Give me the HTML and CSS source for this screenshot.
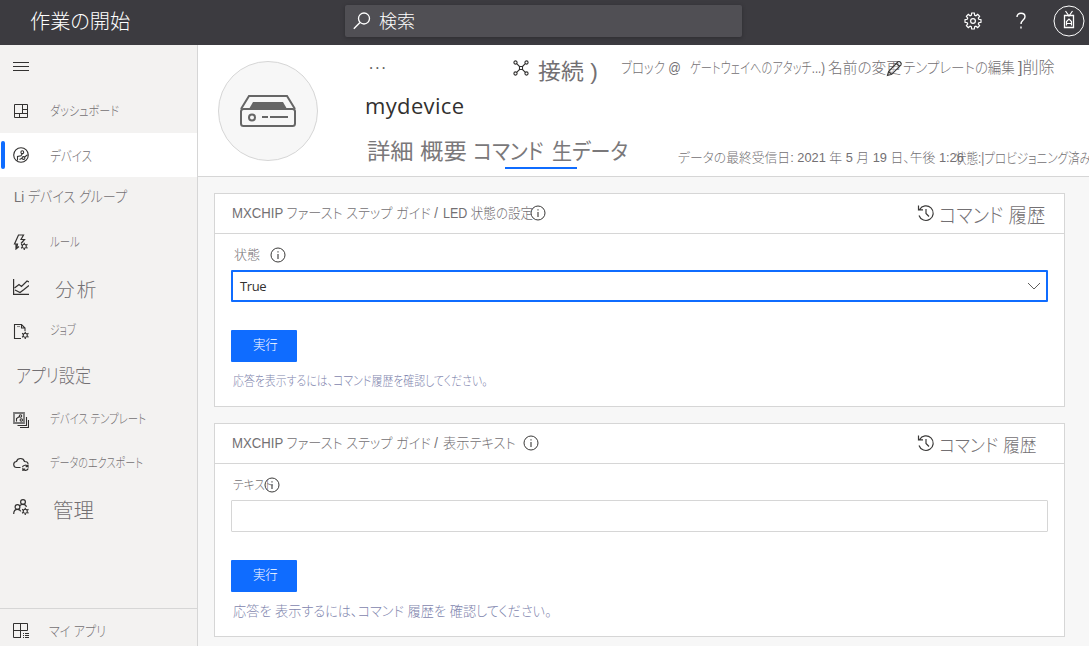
FILE: index.html
```html
<!DOCTYPE html>
<html lang="ja">
<head>
<meta charset="utf-8">
<title>作業の開始</title>
<link rel="stylesheet" href="styles.css">
</head>
<body>
<svg class="defs" width="0" height="0">
  <symbol id="info" viewBox="0 0 16 16"><circle cx="8" cy="8" r="7" fill="#fff" fill-opacity=".4" stroke="#3b3a39"/><path d="M8 7v5M8 4.2v1.4" stroke="#3b3a39" stroke-width="1.1"/></symbol>
  <symbol id="cog" viewBox="0 0 16 16"><circle cx="8" cy="8" r="4.400" fill="none" stroke="#323130" stroke-width="2.400"/><path d="M8 0v3M8 13v3M1.100 4l2.600 1.500M12.300 10.500l2.600 1.500M1.100 12l2.600-1.500M12.300 5.500l2.600-1.500" stroke="#323130" stroke-width="2.600"/></symbol>
  <symbol id="history" viewBox="0 0 18 18"><path d="M2.600 5.500A7.300 7.300 0 1 1 2 11.500M1.500 1.500v4.300h4.500M9 5v4.500l3 3" fill="none" stroke="#3b3a39" stroke-width="1.200"/></symbol>
</svg>
<header class="topbar">
  <div class="txt brand">作業の開始</div>
  <div class="search">
    <svg width="18" height="18" viewBox="0 0 18 18"><circle cx="11" cy="6.500" r="5.500" fill="none" stroke="#fff" stroke-width="1.300"/><path d="M7 10.500L.8 16.800" stroke="#fff" stroke-width="1.400"/></svg>
    <div class="txt search-text">検索</div>
  </div>
  <div class="top-actions">
    <svg width="18" height="18" viewBox="0 0 18 18" fill="none" stroke="#fff" stroke-width="1.200"><circle cx="9" cy="9" r="2.400"/><path d="M7.700 1h2.600l.4 2.200 1.200.5 1.800-1.300 1.900 1.900-1.300 1.800.5 1.200 2.200.4v2.600l-2.200.4-.5 1.200 1.300 1.800-1.900 1.900-1.800-1.300-1.200.5-.4 2.200H7.700l-.4-2.200-1.200-.5-1.800 1.300-1.900-1.900 1.300-1.800-.5-1.200L1 10.300V7.700l2.200-.4.5-1.200-1.300-1.800 1.900-1.900 1.800 1.300 1.200-.5z"/></svg>
    <svg width="12" height="18" viewBox="0 0 12 18" fill="none" stroke="#fff" stroke-width="1.400"><path d="M2 5c0-2.300 1.600-3.800 4-3.800S10 2.500 10 4.700c0 3.300-4 3.500-4 7.300M6 14.500v2"/></svg>
    <svg width="32" height="32" viewBox="0 0 32 32" fill="none" stroke="#fff"><circle cx="16" cy="16" r="15"/><path d="M11.500 10.500h9v12h-9z" stroke-width="1.300"/><path d="M12.500 6l3.500 5 3.500-5M13.500 20.500v-4l2.500-2.500 2.500 2.500v4M13.500 18.500h5" stroke-width="1.200"/></svg>
  </div>
</header>
<div class="body">
  <nav class="nav">
    <div class="item menu"><svg width="16" height="10" viewBox="0 0 16 10"><path d="M0 .5h16M0 4.500h16M0 8.500h16" stroke="#323130"/></svg></div>
    <div class="item"><svg width="16" height="16" viewBox="0 0 16 16" fill="none" stroke="#323130"><path d="M1.500 1.500h13v13h-13zM9.500 1.500v9M1.500 10.500h13M6.500 10.500v4M9.500 6.500h5"/></svg><span class="txt n-dash">ダッシュボード</span></div>
    <div class="item active"><svg width="16" height="16" viewBox="0 0 16 16" fill="none" stroke="#323130" stroke-width="1.100"><circle cx="8" cy="8" r="7.300"/><circle cx="9.300" cy="5.200" r="1.400"/><circle cx="10.500" cy="11" r="1.400"/><path d="M4.500 13.500V9.500l3.500-.8 1.200-2M11.600 10l3-2.200M6.500 12.500l2.500-1.300"/></svg><span class="txt n-dev">デバイス</span></div>
    <div class="item group"><span class="txt n-group">Li デバイス グループ</span></div>
    <div class="item rule"><svg width="16" height="16" viewBox="0 0 16 16" fill="none" stroke="#323130" stroke-width="1.200"><path d="M3.500 15l1-5H1.500L5.500 1h5L8 5.500h3.500L8 9.500M3 10.500v4.500l3-2.500"/><use href="#cog" x="7.500" y="8.500" width="7.500" height="7.500"/></svg><span class="txt n-rule">ルール</span></div>
    <div class="item ana"><svg width="16" height="16" viewBox="0 0 16 16" fill="none" stroke="#323130" stroke-width="1.200"><path d="M.6 0v15.400H16"/><path d="M1.500 9L6 5.500l2.500 2L14 2l2 1M2 11l5 2.500 4-3 5-4"/></svg><span class="txt n-ana">分析</span></div>
    <div class="item job"><svg width="16" height="16" viewBox="0 0 16 16" fill="none" stroke="#323130" stroke-width="1.100"><path d="M8 15.500H1.500v-14h7l3.500 3.500v3M8.500 1.500v3.500H12"/><path d="M4 3.500h3" stroke="#888"/><use href="#cog" x="8.500" y="8.500" width="7.500" height="7.500"/></svg><span class="txt n-job">ジョブ</span></div>
    <div class="item set"><span class="txt n-set">アプリ設定</span></div>
    <div class="item tpl"><svg width="16" height="16" viewBox="0 0 16 16" fill="none" stroke="#323130" stroke-width="1.100"><path d="M1 1h10v10H1z" stroke="#777" stroke-width="1.800"/><path d="M13.500 5v8.500H4.500M15.500 8v7.500H7"/><circle cx="7.500" cy="4" r="1.200"/><circle cx="8.300" cy="8" r="1.200"/><path d="M3.500 9.500v-3l3-2"/></svg><span class="txt n-tpl">デバイス テンプレート</span></div>
    <div class="item exp"><svg width="16" height="16" viewBox="0 0 16 16" fill="none" stroke="#323130" stroke-width="1.200"><path d="M7.500 11.500H4a3 3 0 0 1-.5-6C4 3.500 6 2.500 7.500 2.500c2 0 3.500 1 4 3 2 0 3.500 1 3.500 2.500"/><path d="M9.500 11c.5-2 4-2.500 5.500-.5V8.500M15 10.700h-2.300M15.200 12.500c-.7 2.200-4 2.500-5.300.7V15M9.900 13h2.300"/></svg><span class="txt n-exp">データのエクスポート</span></div>
    <div class="item adm"><svg width="16" height="16" viewBox="0 0 16 16" fill="none" stroke="#323130" stroke-width="1.200"><circle cx="10" cy="3" r="2.400"/><circle cx="4.500" cy="8" r="2.400"/><path d="M.7 15c0-3 1.500-4.600 3.800-4.600 1.500 0 2.800.7 3.300 2M6.500 7c.7-1 2-1.700 3.500-1.700s3 .7 3.500 2.500"/><use href="#cog" x="8.500" y="8.500" width="7.500" height="7.500"/></svg><span class="txt n-adm">管理</span></div>
    <div class="item apps"><svg width="16" height="16" viewBox="0 0 16 16" fill="none" stroke="#323130"><path d="M8 14.500H.5V.5h14v7H.5M7.500.5v14" /><path d="M10 10.500h1M12 10.500h4M10 12.500h1M12 12.500h4M10 14.500h1M12 14.500h4"/></svg><span class="txt n-apps">マイ アプリ</span></div>
  </nav>
  <main class="main">
    <section class="device">
      <div class="avatar"><svg width="58" height="34" viewBox="0 0 58 34" fill="none" stroke="#666" stroke-width="2"><path d="M2 15L10 2h38l8 13"/><path d="M14 8h30l4 7H10z" fill="#666" stroke="none"/><rect x="2" y="15" width="54" height="17" rx="2.500"/><circle cx="13" cy="23.500" r="3"/><path d="M23 23h6M31 23h18"/></svg></div>
      <div class="info">
        <div class="toolbar">
          <span class="dots">···</span>
          <svg class="conn" width="16" height="16" viewBox="0 0 16 16" fill="none" stroke="#323130" stroke-width="1.100"><circle cx="2.500" cy="2.500" r="1.600"/><circle cx="13.500" cy="2.500" r="1.600"/><circle cx="2.500" cy="13.500" r="1.600"/><circle cx="13.500" cy="13.500" r="1.600"/><path d="M3.700 3.700L7 7M12.300 3.700L9 7M3.700 12.300L7 9M12.300 12.300L9 9M6.500 6.500h3v3h-3z"/></svg>
          <span class="txt a-conn"><b>接続</b> )</span>
          <span class="txt a-block">ブロック @</span>
          <span class="txt a-gate">ゲートウェイへのアタッチ...)</span>
          <span class="txt a-name">名前の変更</span>
          <svg class="pencil" width="17" height="17" viewBox="0 0 17 17"><path d="M1.500 15.500l1.200-4.200L12 1.800c1.500-1 4 1.200 3 3L5.700 14.300zM10.500 3.500l3 3M2.700 11.300l3 3" fill="#fff" fill-opacity=".45" stroke="#3b3a39" stroke-width="1.200"/></svg>
          <span class="txt a-tpl">テンプレートの編集</span>
          <span class="txt a-del"><i>]</i>削除</span>
        </div>
        <h1>mydevice</h1>
        <div class="subrow">
          <div class="tabs"><span class="txt tab-a">詳細 概要</span><span class="txt tab-b">コマンド</span><span class="txt tab-c">生データ</span></div>
          <span class="txt s-date">データの最終受信日: 2021 年 5 月 19 日、午後 1:26</span>
          <span class="txt s-state">状態:|プロビジョニング済み</span>
        </div>
      </div>
    </section>
    <section class="card">
      <div class="card-head">
        <span class="txt c-path">MXCHIP ファースト ステップ ガイド /</span><span class="txt c-led">LED 状態の設定</span>
        <svg class="ic-led" width="16" height="16"><use href="#info"/></svg>
        <div class="hist"><svg width="18" height="18"><use href="#history"/></svg><span class="txt c-hist1">コマンド 履歴</span></div>
      </div>
      <div class="card-body">
        <div class="field-label"><span class="txt f-state">状態</span><svg width="16" height="16"><use href="#info"/></svg></div>
        <div class="select"><span>True</span><svg width="14" height="8" viewBox="0 0 14 8"><path d="M1 1l6 6 6-6" fill="none" stroke="#605e5c"/></svg></div>
        <div class="run"><span class="txt r-run">実行</span></div>
        <div class="note"><span class="txt note1">応答を表示するには、コマンド履歴を確認してください。</span></div>
      </div>
    </section>
    <section class="card">
      <div class="card-head">
        <span class="txt c-path">MXCHIP ファースト ステップ ガイド /</span><span class="txt c-disp">表示テキスト</span>
        <svg class="ic-disp" width="16" height="16"><use href="#info"/></svg>
        <div class="hist"><svg width="18" height="18"><use href="#history"/></svg><span class="txt c-hist2">コマンド 履歴</span></div>
      </div>
      <div class="card-body">
        <div class="field-label"><span class="txt f-text">テキスト</span><svg width="16" height="16"><use href="#info"/></svg></div>
        <div class="input"></div>
        <div class="run"><span class="txt r-run">実行</span></div>
        <div class="note"><span class="txt note2">応答を 表示するには、コマンド 履歴を 確認してください。</span></div>
      </div>
    </section>
  </main>
</div>
</body>
</html>
```
FILE: styles.css
```css
* { box-sizing: border-box; }
body { margin: 0; width: 1089px; height: 646px; overflow: hidden; background: #f7f7f7; color: #737073; font: 300 14px "Liberation Sans", "Noto Sans CJK JP", sans-serif; }
svg { display: block; flex: none; }
.defs { position: absolute; }

/* Condensed labels: layout width is fixed, glyphs are scaled horizontally */
.txt { display: block; flex: none; white-space: pre; line-height: 24px; font-feature-settings: "palt"; transform: scaleX(var(--sx, 1)); transform-origin: 0 50%; }

.topbar { display: flex; align-items: center; height: 45px; padding-bottom: 3px; background: #3c3b40; color: #fff; }
.brand { width: 100px; margin: 2px 0 0 30px; font-size: 20px; --sx: 1.01; }
.search { display: flex; align-items: center; width: 397px; height: 32px; margin-left: 215px; padding-left: 8px; border-radius: 2px; background: #504f54; box-shadow: 0 1px 4px rgba(0,0,0,.25); }
.search-text { margin: 2px 0 0 8px; font-size: 18px; }
.top-actions { display: flex; align-items: center; margin-left: 222px; }
.top-actions svg:nth-child(2) { margin-left: 33px; }
.top-actions svg:nth-child(3) { margin-left: 26px; }

.body { display: flex; height: 601px; }
.nav { display: flex; flex-direction: column; width: 198px; flex: none; border-right: 1px solid #d6d6d6; background: #f3f2f1; }
.item { display: flex; align-items: center; flex: none; height: 44px; padding-left: 13px; }
.item .txt { margin-left: 21px; }
.active { position: relative; background: #fff; }
.active::before { content: ""; position: absolute; left: 1px; top: 8px; width: 4px; height: 28px; border-radius: 2px; background: #0f6cff; }
.group, .set { padding-left: 0; }
.item .n-dash { font-size: 13px; --sx: .854; }
.item .n-dev { margin-top: 1px; font-size: 14px; --sx: .826; }
.group { height: 40px; }
.item .n-group { margin-left: 14px; font-size: 15px; --sx: .871; }
.rule { height: 50px; }
.item .n-rule { font-size: 13px; --sx: .8; }
.ana { height: 42px; padding-bottom: 2px; }
.item .n-ana { margin: 8px 0 0 26px; font-size: 19px; letter-spacing: 2px; --sx: 1.03; }
.item .n-job { margin-bottom: 2px; font-size: 13px; --sx: .76; }
.set { height: 46px; }
.item .n-set { margin: 2px 0 0 16px; font-size: 19px; --sx: .845; }
.tpl { height: 42px; padding-bottom: 1px; }
.item .n-tpl { margin-bottom: 1px; font-size: 13px; --sx: .8; }
.exp { height: 45px; }
.item .n-exp { margin-bottom: 2px; font-size: 13px; --sx: .777; }
.adm { height: 44px; padding-bottom: 2px; }
.item .n-adm { margin: 7px 0 0 24px; font-size: 20px; --sx: 1.02; }
.apps { margin-top: auto; height: 38px; border-top: 1px solid #d6d6d6; padding-top: 6px; }
.item .n-apps { margin-left: 20px; font-size: 14px; --sx: .862; }

.main { flex: 1; min-width: 0; }
.device { display: flex; height: 132px; padding: 16px 0 0 20px; border-bottom: 1px solid #d6d6d6; background: #fff; overflow: hidden; }
.avatar { display: flex; align-items: center; justify-content: center; width: 100px; height: 100px; flex: none; border: 1px solid #d6d6d6; border-radius: 50%; background: #f7f7f7; }
.info { margin-left: 47px; }
.toolbar { display: flex; align-items: center; height: 14px; width: 724px; }
.dots { width: 18px; margin-left: 4px; font: 400 16px/14px "Open Sans", sans-serif; letter-spacing: 2px; color: #605e5c; }
.conn { margin-left: 126px; }
.a-conn { width: 59px; margin: 8px 0 0 9px; font-size: 22px; --sx: 1.04; }
.a-conn b { font-weight: 400; }
.a-block { width: 60px; margin-left: 24px; font-size: 15px; --sx: .828; }
.a-gate { width: 135px; margin-left: 9px; font-size: 15px; --sx: .751; }
.a-name { width: 73px; margin-left: 3px; font-size: 15px; --sx: .98; }
.pencil { position: relative; margin-left: -15px; }
.a-tpl { width: 111px; font-size: 15px; --sx: .9; }
.a-del { width: 36px; margin-left: 4px; font-size: 16px; --sx: 1; }
.a-del i { font-style: normal; }
h1 { margin: 14px 0 0; font: 400 22px/32px "Open Sans", "Noto Sans", sans-serif; letter-spacing: .35px; color: #323130; }
.subrow { display: flex; align-items: flex-start; margin-top: 12px; }
.tabs { display: flex; width: 263px; height: 36px; position: relative; font-size: 22px; font-weight: 400; color: #7a787a; }
.tabs::after { content: ""; position: absolute; left: 140px; top: 34px; width: 72px; height: 2px; background: #0f6cff; }
.tabs .txt { line-height: 38px; }
.tab-a { width: 106px; margin-left: 2px; --sx: 1.06; }
.tab-b { width: 79px; --sx: .91; }
.tab-c { width: 76px; --sx: .91; }
.s-date { width: 277px; margin: 13px 0 0 50px; font-size: 13px; --sx: .985; }
.s-state { width: 134px; margin-top: 13px; font-size: 14px; --sx: .825; }

.card { width: 851px; height: 214px; margin: 16px 0 0 16px; border: 1px solid #d6d6d6; background: #fff; }
.card-head { display: flex; align-items: center; height: 40px; padding: 0 0 1px 17px; border-bottom: 1px solid #d6d6d6; }
.c-path { width: 211px; --sx: .94; }
.c-led { width: 89px; --sx: .894; }
.c-disp { width: 73px; --sx: .945; }
.ic-led { margin-left: -2px; }
.ic-disp { margin-left: 7px; }
.hist { display: flex; align-items: center; width: 147px; margin-left: auto; }
.c-hist1 { margin: 5px 0 0 4px; font-size: 20px; --sx: .915; }
.c-hist2 { margin: 5px 0 0 4px; font-size: 18px; --sx: .935; }
.card-body { padding: 13px 16px 0; }
.field-label { display: flex; align-items: center; height: 17px; padding-bottom: 1px; font-size: 13px; }
.f-state { width: 26px; margin: 0 10px 0 3px; }
.f-text { width: 31px; margin-left: 2px; --sx: .9; }
.select, .input { display: flex; align-items: center; justify-content: space-between; height: 32px; margin-top: 6px; background: #fff; }
.select { padding: 0 5px 0 7px; border: 2px solid #0f6cff; border-radius: 1px; color: #323130; font: 400 13px "Open Sans", "Noto Sans", sans-serif; letter-spacing: -.4px; }
.input { border: 1px solid #d6d6d6; border-radius: 1px; }
.run { display: flex; align-items: center; justify-content: center; width: 66px; height: 32px; margin-top: 28px; padding: 0 0 2px 4px; border-radius: 1px; background: #0f6cff; color: #fff; font-size: 13px; }
.r-run { --sx: .95; }
.note { margin: 7px 0 0 2px; color: #7f86ae; }
.note1 { font-size: 13px; --sx: .838; }
.note2 { font-size: 14px; --sx: .94; }
```
